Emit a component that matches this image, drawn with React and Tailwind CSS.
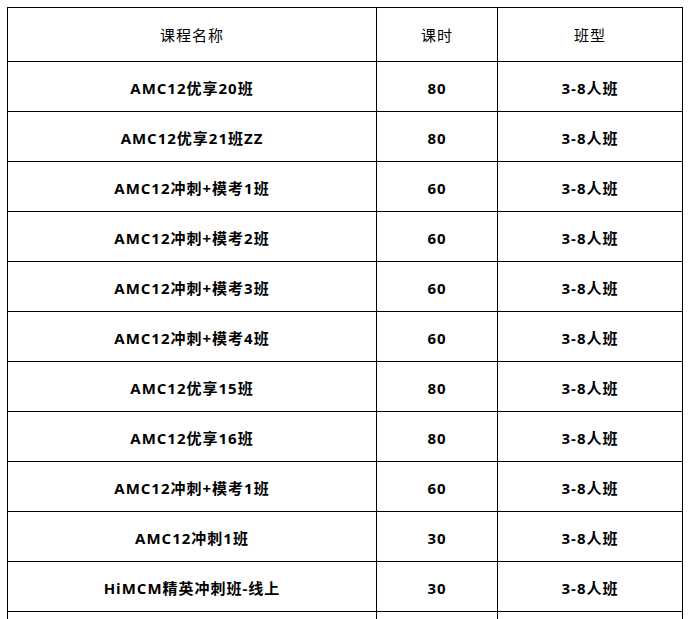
const rows = [
  ["AMC12优享20班", "80", "3-8人班"],
  ["AMC12优享21班ZZ", "80", "3-8人班"],
  ["AMC12冲刺+模考1班", "60", "3-8人班"],
  ["AMC12冲刺+模考2班", "60", "3-8人班"],
  ["AMC12冲刺+模考3班", "60", "3-8人班"],
  ["AMC12冲刺+模考4班", "60", "3-8人班"],
  ["AMC12优享15班", "80", "3-8人班"],
  ["AMC12优享16班", "80", "3-8人班"],
  ["AMC12冲刺+模考1班", "60", "3-8人班"],
  ["AMC12冲刺1班", "30", "3-8人班"],
  ["HiMCM精英冲刺班-线上", "30", "3-8人班"],
  ["", "", ""],
];

export default function App() {
  return (
    <div className="w-[691px] h-[619px] overflow-hidden bg-white pl-[7px] pt-[7px] text-[15px] text-black [font-family:'Open_Sans','Noto_Sans_CJK_SC',sans-serif]">
      <div className="grid grid-cols-[369px_121px_185px] border-l border-t border-black w-[676px]">
        {["课程名称", "课时", "班型"].map((h, i) => (
          <div key={i} className="h-[54px] border-r border-b border-black flex items-center justify-center pt-[2px] font-normal tracking-[1px]">
            {h}
          </div>
        ))}
        {rows.map((r, ri) =>
          r.map((c, ci) => (
            <div key={ri + "-" + ci} className="h-[50px] border-r border-b border-black flex items-center justify-center pt-[3px] font-bold tracking-[1px]">
              {c}
            </div>
          ))
        )}
      </div>
    </div>
  );
}
